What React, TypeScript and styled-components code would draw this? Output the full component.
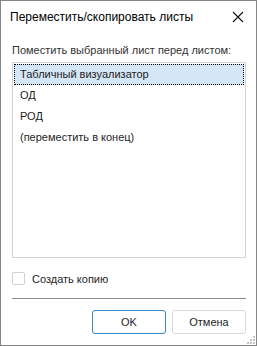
import React, { useState } from 'react'
import styled, { createGlobalStyle } from 'styled-components'

const Global = createGlobalStyle`
  html, body {
    margin: 0;
    padding: 0;
    background: #fff;
  }
  * {
    box-sizing: border-box;
  }
`

const Window = styled.div`
  width: 257px;
  height: 346px;
  border: 1px solid #858585;
  background: #fff;
  display: flex;
  flex-direction: column;
  font-family: 'Liberation Sans', Arial, sans-serif;
  font-size: 11px;
  color: #1e1e1e;
  position: relative;
`

const TitleBar = styled.div`
  height: 31px;
  display: flex;
  align-items: center;
  justify-content: space-between;
  padding: 0 10px 0 9px;
`

const Title = styled.span`
  font-size: 12px;
  color: #000;
`

const CloseBtn = styled.button`
  width: 16px;
  height: 16px;
  border: none;
  background: none;
  padding: 0;
  display: flex;
  align-items: center;
  justify-content: center;
`

const Body = styled.div`
  flex: 1;
  display: flex;
  flex-direction: column;
  padding: 10px 10px 0 11px;
`

const Label = styled.div`
  line-height: 16px;
  color: #333;
  margin-bottom: 4px;
  white-space: nowrap;
`

const List = styled.div`
  height: 196px;
  border: 1px solid #d4d4d4;
  padding: 1px;
`

const Item = styled.div<{ $selected?: boolean }>`
  height: 21px;
  line-height: 19px;
  padding-left: 5px;
  border: 1px dotted ${p => (p.$selected ? '#000' : 'transparent')};
  background: ${p => (p.$selected ? '#d5e7f7' : 'transparent')};
  color: #1e1e1e;
  cursor: default;
`

const CheckRow = styled.label`
  display: flex;
  align-items: center;
  gap: 7px;
  margin-top: 14px;
  height: 13px;
`

const Box = styled.span`
  width: 13px;
  height: 13px;
  border: 1px solid #d0d0d0;
  border-radius: 2px;
  background: #fff;
`

const Separator = styled.div`
  height: 1px;
  background: #8a8a8a;
  margin-top: 13px;
`

const Footer = styled.div`
  display: flex;
  justify-content: flex-end;
  gap: 6px;
  margin-top: 11px;
`

const Button = styled.button<{ $primary?: boolean }>`
  width: 74px;
  height: 24px;
  border: 1px solid ${p => (p.$primary ? '#3b87c4' : '#d9d9d9')};
  border-radius: 3px;
  background: #fff;
  font-family: inherit;
  font-size: 11px;
  color: #1e1e1e;
  padding: 0;
`

const Grip = styled.svg`
  position: absolute;
  right: 1px;
  bottom: 1px;
`

const items = ['Табличный визуализатор', 'ОД', 'РОД', '(переместить в конец)']

export default function App() {
  const [selected, setSelected] = useState(0)
  return (
    <>
      <Global />
      <Window>
        <TitleBar>
          <Title>Переместить/скопировать листы</Title>
          <CloseBtn>
            <svg width="12" height="12" viewBox="0 0 12 12">
              <path d="M1 1L11 11M11 1L1 11" stroke="#111" strokeWidth="1.1" />
            </svg>
          </CloseBtn>
        </TitleBar>
        <Body>
          <Label>Поместить выбранный лист перед листом:</Label>
          <List>
            {items.map((t, i) => (
              <Item key={t} $selected={i === selected} onClick={() => setSelected(i)}>
                {t}
              </Item>
            ))}
          </List>
          <CheckRow>
            <Box />
            <span>Создать копию</span>
          </CheckRow>
          <Separator />
          <Footer>
            <Button $primary>OK</Button>
            <Button>Отмена</Button>
          </Footer>
        </Body>
        <Grip width="8" height="8" viewBox="0 0 8 8">
          <g fill="#c4c4c4">
            <rect x="6" y="0" width="2" height="2" />
            <rect x="3" y="3" width="2" height="2" />
            <rect x="6" y="3" width="2" height="2" />
            <rect x="0" y="6" width="2" height="2" />
            <rect x="3" y="6" width="2" height="2" />
            <rect x="6" y="6" width="2" height="2" />
          </g>
        </Grip>
      </Window>
    </>
  )
}
